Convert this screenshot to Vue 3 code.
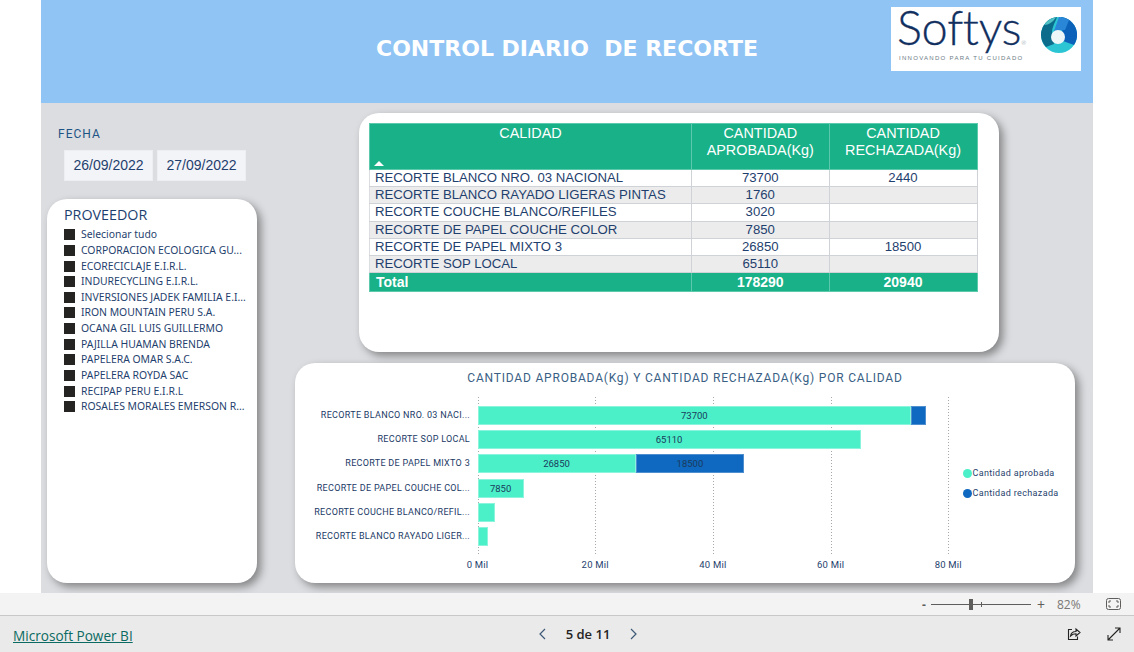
<script setup>
import { computed } from "vue";

const proveedores = [
  "Selecionar tudo",
  "CORPORACION ECOLOGICA GU...",
  "ECORECICLAJE E.I.R.L.",
  "INDURECYCLING E.I.R.L.",
  "INVERSIONES JADEK FAMILIA E.I...",
  "IRON MOUNTAIN PERU S.A.",
  "OCANA GIL LUIS GUILLERMO",
  "PAJILLA HUAMAN BRENDA",
  "PAPELERA OMAR S.A.C.",
  "PAPELERA ROYDA SAC",
  "RECIPAP PERU E.I.R.L",
  "ROSALES MORALES EMERSON R...",
];

const filas = [
  { calidad: "RECORTE BLANCO NRO. 03 NACIONAL", aprobada: 73700, rechazada: 2440 },
  { calidad: "RECORTE BLANCO RAYADO LIGERAS PINTAS", aprobada: 1760, rechazada: "" },
  { calidad: "RECORTE COUCHE BLANCO/REFILES", aprobada: 3020, rechazada: "" },
  { calidad: "RECORTE DE PAPEL COUCHE COLOR", aprobada: 7850, rechazada: "" },
  { calidad: "RECORTE DE PAPEL MIXTO 3", aprobada: 26850, rechazada: 18500 },
  { calidad: "RECORTE SOP LOCAL", aprobada: 65110, rechazada: "" },
];

const barras = [
  { label: "RECORTE BLANCO NRO. 03 NACI...", aprobada: 73700, rechazada: 2440, etiqueta: true },
  { label: "RECORTE SOP LOCAL", aprobada: 65110, rechazada: 0, etiqueta: true },
  { label: "RECORTE DE PAPEL MIXTO 3", aprobada: 26850, rechazada: 18500, etiqueta: true },
  { label: "RECORTE DE PAPEL COUCHE COL...", aprobada: 7850, rechazada: 0, etiqueta: true },
  { label: "RECORTE COUCHE BLANCO/REFIL...", aprobada: 3020, rechazada: 0, etiqueta: false },
  { label: "RECORTE BLANCO RAYADO LIGER...", aprobada: 1760, rechazada: 0, etiqueta: false },
];

const PX_POR_MIL = 5.885;
const ejes = [0, 20, 40, 60, 80];

const ancho = (valor) => (valor / 1000) * PX_POR_MIL + "px";

const totalAprobada = computed(() => filas.reduce((acc, f) => acc + f.aprobada, 0));
const totalRechazada = computed(() => filas.reduce((acc, f) => acc + (f.rechazada || 0), 0));
</script>

<template>
  <div class="page">
    <div class="report">
      <header class="banner">
        <span></span>
        <h1>CONTROL DIARIO&nbsp; DE RECORTE</h1>
        <div class="logo">
          <div class="logo-text">
            <div class="softys">Softys<sup>®</sup></div>
            <div class="lema">INNOVANDO PARA TU CUIDADO</div>
          </div>
          <svg class="ring" viewBox="0 0 36 36" width="36" height="36">
            <circle cx="18" cy="18" r="18" fill="#2cc5d4" />
            <path d="M20 0A18 18 0 0 1 33 28L22 24Z" fill="#0c62b9" />
            <path d="M18 0A18 18 0 0 1 28 3L24 13L13 14Z" fill="#2a86d6" />
            <path d="M0 18A18 18 0 0 1 16 0C14 6 11 10 11 16L13 27L5 30A18 18 0 0 1 0 18Z" fill="#0b6c8c" />
            <path d="M3 8A18 18 0 0 1 15 0.3C12 5 8 8 3 8Z" fill="#4fc0c4" />
            <circle cx="17" cy="20" r="7" fill="#eef7f7" />
          </svg>
        </div>
      </header>

      <div class="canvas">
        <aside class="left">
          <div class="fecha">FECHA</div>
          <div class="dates">
            <div class="date">26/09/2022</div>
            <div class="date">27/09/2022</div>
          </div>
          <div class="card proveedor">
            <div class="prov-title">PROVEEDOR</div>
            <ul>
              <li v-for="p in proveedores" :key="p">
                <i class="check"></i>
                <span>{{ p }}</span>
              </li>
            </ul>
          </div>
        </aside>

        <main class="right">
          <div class="card table-card">
            <table>
              <thead>
                <tr>
                  <th class="c1">
                    CALIDAD
                    <i class="sort"></i>
                  </th>
                  <th class="c2">CANTIDAD APROBADA(Kg)</th>
                  <th class="c3">CANTIDAD RECHAZADA(Kg)</th>
                </tr>
              </thead>
              <tbody>
                <tr v-for="f in filas" :key="f.calidad">
                  <td>{{ f.calidad }}</td>
                  <td class="num">{{ f.aprobada }}</td>
                  <td class="num">{{ f.rechazada }}</td>
                </tr>
              </tbody>
              <tfoot>
                <tr>
                  <td>Total</td>
                  <td class="num">{{ totalAprobada }}</td>
                  <td class="num">{{ totalRechazada }}</td>
                </tr>
              </tfoot>
            </table>
          </div>

          <div class="card chart-card">
            <div class="chart-title">CANTIDAD APROBADA(Kg) Y CANTIDAD RECHAZADA(Kg) POR CALIDAD</div>
            <div class="chart-body">
              <div class="labels">
                <div v-for="b in barras" :key="b.label" class="label">{{ b.label }}</div>
              </div>
              <div class="plot">
                <div
                  v-for="e in ejes"
                  :key="e"
                  class="grid-line"
                  :style="{ left: e * PX_POR_MIL + 'px' }"
                ></div>
                <div v-for="b in barras" :key="b.label" class="bar-row">
                  <div class="bar teal" :style="{ width: ancho(b.aprobada) }">
                    <template v-if="b.etiqueta">{{ b.aprobada }}</template>
                  </div>
                  <div v-if="b.rechazada" class="bar blue" :style="{ width: ancho(b.rechazada) }">
                    <template v-if="b.rechazada > 5000">{{ b.rechazada }}</template>
                  </div>
                </div>
                <div
                  v-for="e in ejes"
                  :key="'t' + e"
                  class="tick"
                  :style="{ left: e * PX_POR_MIL + 'px' }"
                >
                  {{ e }} Mil
                </div>
              </div>
              <div class="legend">
                <div class="leg"><i class="dot teal"></i>Cantidad aprobada</div>
                <div class="leg"><i class="dot blue"></i>Cantidad rechazada</div>
              </div>
            </div>
          </div>
        </main>
      </div>
    </div>

    <div class="zoombar">
      <span class="minus">-</span>
      <div class="slider"><i class="thumb"></i><i class="mark"></i></div>
      <span class="plus">+</span>
      <span class="pct">82%</span>
      <svg class="fit" width="15" height="12" viewBox="0 0 15 12" fill="none" stroke="#605e5c">
        <rect x="0.5" y="0.5" width="14" height="11" rx="2" />
        <path d="M3 5V3H5M10 3H12V5M12 7V9H10M5 9H3V7" />
      </svg>
    </div>

    <footer class="footer">
      <a class="pbi">Microsoft Power BI</a>
      <div class="pager">
        <svg width="9" height="12" viewBox="0 0 9 12" fill="none" stroke="#3c5a78" stroke-width="1.2">
          <path d="M7 1L2 6L7 11" />
        </svg>
        <span>5 de 11</span>
        <svg width="9" height="12" viewBox="0 0 9 12" fill="none" stroke="#3c5a78" stroke-width="1.2">
          <path d="M2 1L7 6L2 11" />
        </svg>
      </div>
      <div class="actions">
        <svg width="14" height="14" viewBox="0 0 14 14" fill="none" stroke="#252423" stroke-width="1.1">
          <path d="M5 2.5H1.5V12.5H10.5V9.5" />
          <path d="M3.5 9C4 6 6.5 4.5 9 4.5V2L13 5.5L9 9V6.8C7 6.8 5 7.5 3.5 9Z" />
        </svg>
        <svg width="14" height="14" viewBox="0 0 14 14" fill="none" stroke="#252423" stroke-width="1.1">
          <path d="M1 13L13 1M8 1H13V6M1 8V13H6" />
        </svg>
      </div>
    </footer>
  </div>
</template>

<style scoped>
.page {
  width: 1134px;
  height: 652px;
  display: flex;
  flex-direction: column;
  background: #fff;
  overflow: hidden;
  font-family: "Open Sans", sans-serif;
}

.report {
  width: 1052px;
  height: 593px;
  margin-left: 41px;
  background: #dcdde0;
  flex: none;
}

.banner {
  height: 103px;
  background: #90c4f5;
  display: grid;
  grid-template-columns: 1fr auto 1fr;
  align-items: start;
}

.banner h1 {
  margin: 37px 0 0;
  color: #fff;
  font: bold 22px/24px "DejaVu Sans", sans-serif;
  white-space: nowrap;
}

.logo {
  justify-self: end;
  margin: 7px 12px 0 0;
  width: 190px;
  height: 64px;
  background: #fff;
  display: flex;
  box-sizing: border-box;
  padding: 0 4px 0 6px;
  justify-content: space-between;
  align-items: flex-start;
}

.logo-text {
  width: 136px;
}

.softys {
  margin-top: -2px;
  color: #12305f;
  font: 300 47px/44px "Lato", sans-serif;
  letter-spacing: -0.3px;
  -webkit-text-stroke: 0.3px #12305f;
  white-space: nowrap;
}

.softys sup {
  font-size: 6px;
  line-height: 0;
  vertical-align: baseline;
  color: #6a7a85;
  letter-spacing: 0;
  -webkit-text-stroke: 0;
}

.lema {
  margin: 5px 0 0 2px;
  color: #6c7a86;
  font: 6px/8px "Liberation Sans", sans-serif;
  letter-spacing: 1.3px;
  white-space: nowrap;
}

.ring {
  margin-top: 10px;
}

.canvas {
  display: flex;
}

.card {
  background: #fff;
  border-radius: 20px;
  box-shadow: 4px 4px 9px rgba(0, 0, 0, 0.4);
}

.left {
  width: 210px;
  margin-left: 6px;
  flex: none;
}

.fecha {
  margin: 23px 0 0 11px;
  color: #1d5385;
  font: 12px/16px "Roboto", sans-serif;
  letter-spacing: 1px;
}

.dates {
  display: flex;
  gap: 4px;
  margin: 8px 0 0 17px;
}

.date {
  width: 89px;
  height: 31px;
  box-sizing: border-box;
  background: #f3f4f8;
  color: #1f3f6e;
  font: 14px/29px "Liberation Sans", sans-serif;
  text-align: center;
  border: 1px solid #eceef2;
}

.proveedor {
  height: 384px;
  margin-top: 18px;
  box-sizing: border-box;
  padding: 7px 0 0 17px;
}

.prov-title {
  color: #1d3f70;
  font: 14.3px/18px "Open Sans", sans-serif;
}

.proveedor ul {
  list-style: none;
  margin: 3px 0 0;
  padding: 0;
}

.proveedor li {
  display: flex;
  align-items: center;
  height: 15.64px;
  color: #1f3f6e;
  font: 10.4px/15px "Noto Sans", sans-serif;
  white-space: nowrap;
}

.check {
  width: 11px;
  height: 11px;
  background: #252423;
  margin-right: 6px;
  flex: none;
}

.right {
  margin-left: 38px;
  width: 780px;
  flex: none;
  padding-top: 10px;
}

.table-card {
  width: 640px;
  height: 239px;
  margin-left: 64px;
  box-sizing: border-box;
  padding: 10px 0 0 10px;
}

table {
  width: 607.5px;
  table-layout: fixed;
  border-collapse: collapse;
  font-family: "Liberation Sans", sans-serif;
  font-size: 13.2px;
  color: #1f3f6e;
}

th,
td {
  box-sizing: border-box;
  border: 1px solid #cfd2d6;
  padding: 0;
}

th {
  position: relative;
  height: 46px;
  background: #18b188;
  color: #fff;
  font-size: 14.4px;
  font-weight: 400;
  line-height: 17px;
  vertical-align: top;
  border-color: #5cc9ad;
  padding-top: 1px;
}

.c1 {
  width: 322px;
}

.c2 {
  width: 137.5px;
}

.c3 {
  width: 148px;
}

.sort {
  position: absolute;
  left: 4px;
  bottom: 3px;
  width: 0;
  height: 0;
  border-left: 5px solid transparent;
  border-right: 5px solid transparent;
  border-bottom: 5px solid #fff;
}

tbody td {
  height: 17.2px;
  line-height: 15px;
  padding: 0 0 1px 5px;
  border-left-color: #dcdde0;
  white-space: nowrap;
}

tbody tr:nth-child(even) td {
  background: #ececec;
}

tbody td.num,
tfoot td.num {
  text-align: center;
  padding-left: 0;
}

tfoot td {
  height: 18.5px;
  line-height: 16px;
  background: #18b188;
  color: #fff;
  font-size: 14px;
  font-weight: 700;
  padding-left: 6px;
  border-color: #5cc9ad;
}

.chart-card {
  width: 780px;
  height: 220px;
  margin-top: 11px;
  position: relative;
}

.chart-title {
  padding-top: 7px;
  color: #3a5f85;
  font: 12px/16px "Roboto", sans-serif;
  letter-spacing: 0.8px;
  text-align: center;
}

.chart-body {
  display: flex;
  margin-top: 11px;
}

.labels {
  width: 175px;
  flex: none;
  padding-top: 9px;
}

.label {
  height: 24.2px;
  line-height: 19px;
  text-align: right;
  color: #1a3a66;
  font: 9px/19px "Roboto", sans-serif;
  letter-spacing: 0.3px;
  white-space: nowrap;
}

.plot {
  position: relative;
  width: 482px;
  margin-left: 7.5px;
  height: 159px;
  padding-top: 9px;
  box-sizing: border-box;
  flex: none;
}

.grid-line {
  position: absolute;
  top: 0;
  bottom: 0;
  width: 1px;
  background: repeating-linear-gradient(#a8a8a8 0 1px, transparent 1px 3px);
}

.bar-row {
  position: relative;
  display: flex;
  height: 24.2px;
}

.bar {
  height: 19px;
  box-sizing: border-box;
  text-align: center;
  color: #1a3a5c;
  font: 9.5px/18px "Roboto", sans-serif;
}

.teal {
  background: #4bf0c8;
}

.bar.teal {
  border: 1px solid #8af5dc;
}

.blue {
  background: #0f69c0;
}

.bar.blue {
  border: 1px solid #4f8fd0;
}

.tick {
  position: absolute;
  top: 161px;
  width: 60px;
  margin-left: -30px;
  text-align: center;
  color: #1f3f6e;
  font: 9.5px/14px "Roboto", sans-serif;
  letter-spacing: 0.2px;
}

.legend {
  margin: 67px 0 0 3px;
}

.leg {
  display: flex;
  align-items: center;
  height: 19.5px;
  color: #1f3f6e;
  font: 9px/19px "Roboto", sans-serif;
  letter-spacing: 0.35px;
  white-space: nowrap;
}

.dot {
  width: 9px;
  height: 9px;
  border-radius: 50%;
  margin-right: 1px;
}

.zoombar {
  height: 22px;
  background: #f3f3f3;
  border-bottom: 1px solid #c8c8c8;
  display: flex;
  align-items: center;
  position: relative;
  flex: none;
  padding-left: 922px;
  color: #605e5c;
  font-size: 12px;
}

.minus {
  width: 9px;
  font-weight: 700;
}

.slider {
  position: relative;
  width: 100px;
  height: 1px;
  background: #605e5c;
}

.thumb {
  position: absolute;
  left: 38px;
  top: -5px;
  width: 4px;
  height: 11px;
  background: #605e5c;
}

.mark {
  position: absolute;
  left: 50px;
  top: -2px;
  width: 1px;
  height: 5px;
  background: #605e5c;
}

.plus {
  margin-left: 6px;
  font-size: 14px;
  width: 20px;
}

.pct {
  width: 49px;
  color: #7a7876;
}

.footer {
  flex: 1;
  background: #eaeaea;
  display: grid;
  grid-template-columns: 1fr auto 1fr;
  align-items: center;
  padding: 0 13px;
}

.pbi {
  color: #0b6a62;
  font-size: 13.6px;
  padding-top: 2px;
  text-decoration: underline;
}

.pager {
  display: flex;
  align-items: center;
  gap: 19px;
  margin-left: 42px;
  color: #252423;
  font-size: 13px;
  font-weight: 600;
}

.actions {
  display: flex;
  justify-content: flex-end;
  gap: 26px;
}
</style>

<style>
html,
body {
  margin: 0;
  overflow: hidden;
}
</style>
